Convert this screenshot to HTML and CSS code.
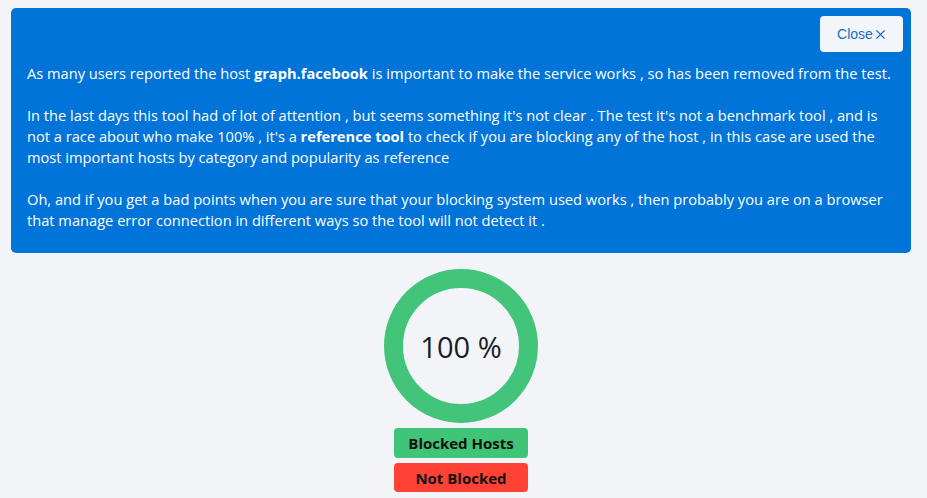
FILE: index.html
```html
<!DOCTYPE html>
<html>
<head>
<meta charset="utf-8">
<link rel="stylesheet" href="styles.css">
</head>
<body>
<div class="notice">
  <div class="notice-head">
    <button class="close-btn">Close<svg class="close-icon" viewBox="0 0 12 12" width="11" height="11"><path d="M1.5 1.5 L10.5 10.5 M10.5 1.5 L1.5 10.5" stroke="currentColor" stroke-width="1.5" fill="none"/></svg></button>
  </div>
  <p>As many users reported the host <b>graph.facebook</b> is important to make the service works , so has been removed from the test.</p>
  <p>In the last days this tool had of lot of attention , but seems something it's not clear . The test it's not a benchmark tool , and is not a race about who make 100% , it's a <b>reference tool</b> to check if you are blocking any of the host , in this case are used the most important hosts by category and popularity as reference</p>
  <p>Oh, and if you get a bad points when you are sure that your blocking system used works , then probably you are on a browser that manage error connection in different ways so the tool will not detect it .</p>
</div>
<div class="result">
  <div class="donut"><span class="pct">100 %</span></div>
  <div class="legend legend-ok">Blocked Hosts</div>
  <div class="legend legend-bad">Not Blocked</div>
</div>
</body>
</html>
```
FILE: styles.css
```css
html, body { margin: 0; padding: 0; }
body {
  background: #f2f4f8;
  font-family: "Open Sans", "Noto Sans", sans-serif;
  width: 927px;
}
.notice {
  margin: 8px 16px 0 11px;
  background: #0074d9;
  color: #fff;
  border-radius: 5px;
  padding: 8px 16px 22px 16px;
  font-size: 14.65px;
  line-height: 21px;
}
.notice-head {
  display: flex;
  justify-content: flex-end;
  margin-right: -8px;
}
.close-btn {
  width: 83px;
  height: 36px;
  background: #f2f5f9;
  border: none;
  border-radius: 4px;
  color: #1a6ec4;
  font-family: "Liberation Sans", Arial, sans-serif;
  font-size: 14px;
  display: flex;
  align-items: center;
  justify-content: center;
  gap: 2px;
  padding: 0;
}
.close-icon { margin-top: 1px; }
.notice p { margin: 0 0 21px 0; }
.notice p:first-of-type { margin-top: 11px; }
.notice p:last-of-type { margin-bottom: 0; }
.result {
  display: flex;
  flex-direction: column;
  align-items: center;
  padding-top: 16px;
  margin-left: -5px;
}
.donut {
  width: 116px;
  height: 116px;
  border: 19px solid #42c57a;
  border-radius: 50%;
  display: flex;
  align-items: center;
  justify-content: center;
}
.pct {
  font-size: 29px;
  color: #1b1b2b;
  font-family: "Open Sans", sans-serif;
}
.legend {
  width: 134px;
  height: 30px;
  border-radius: 4px;
  display: flex;
  align-items: center;
  justify-content: center;
  font-weight: bold;
  font-size: 15px;
  color: #111;
}
.legend-ok { background: #40c477; margin-top: 5px; }
.legend-bad { background: #ff4136; margin-top: 5px; height: 29px; }
```
